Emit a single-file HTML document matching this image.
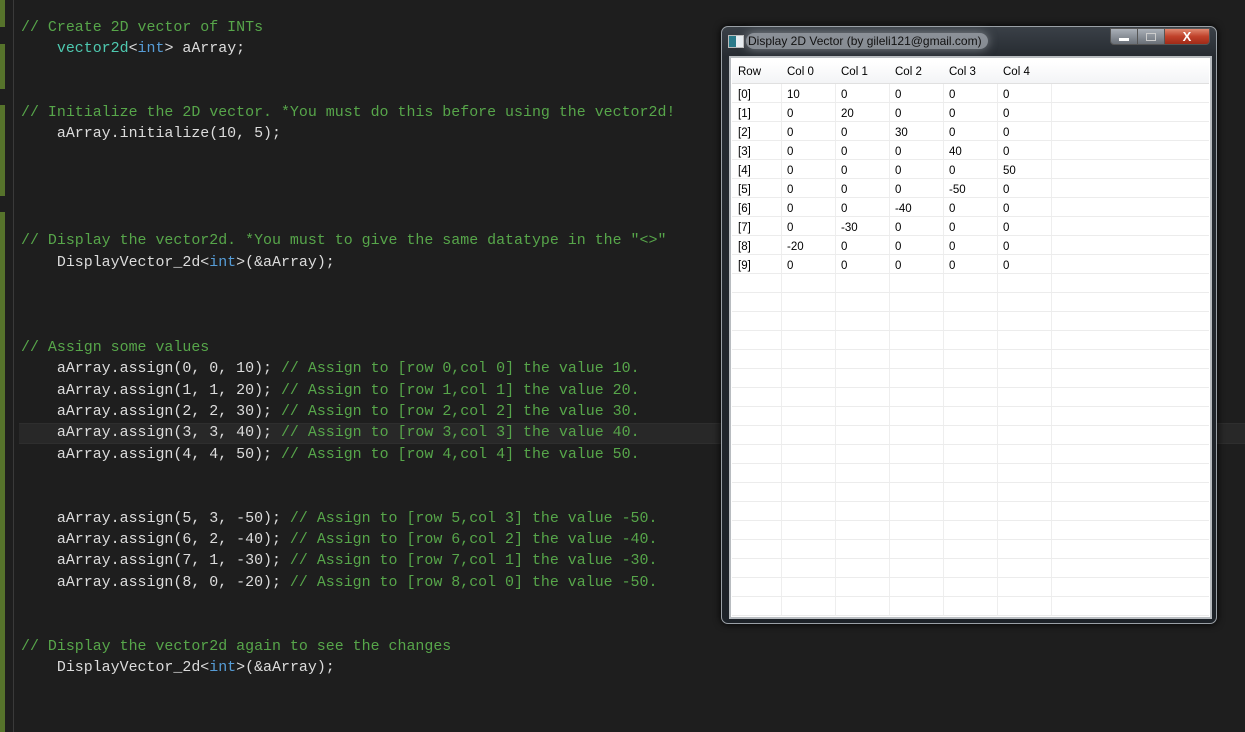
<!DOCTYPE html>
<html><head><style>
body{margin:0;width:1245px;height:732px;background:#1e1e1e;position:relative;overflow:hidden;font-family:"Liberation Mono",monospace;}
.g{position:absolute;left:0;width:5px;background:#56732b;}
.vl{position:absolute;left:13px;top:0;width:1px;height:732px;background:#3a3a3a;}
.hl{position:absolute;left:19px;top:423px;width:1226px;height:21px;background:#282828;border-top:1px solid #2e2e2e;border-bottom:1px solid #2e2e2e;box-sizing:border-box;}
.l{position:absolute;left:21px;font-size:14.95px;line-height:21px;color:#dcdcdc;white-space:pre;margin-top:1px;}
.c{color:#57a64a}.t{color:#4ec9b0}.k{color:#569cd6}
.win{position:absolute;left:721px;top:26px;width:496px;height:598px;border-radius:7px;background:linear-gradient(#3a4047,#262b31 30px,#1d2228);border:1px solid #9aa0a6;box-sizing:border-box;box-shadow:0 0 8px #000;}
.title{position:absolute;left:746px;top:33px;font-family:"Liberation Sans",sans-serif;font-size:12px;color:#111;background:rgba(210,215,222,.55);padding:1px 6px 1px 2px;border-radius:10px;box-shadow:0 0 10px rgba(210,215,222,.5);}
.ico{position:absolute;left:728px;top:35px;width:14px;height:11px;background:linear-gradient(90deg,#2a7a8a 50%,#e8eef2 50%);border:1px solid #bbb;}
.btn{position:absolute;top:28px;height:17px;border:1px solid #555;box-sizing:border-box;}
.inner{position:absolute;left:729px;top:56px;width:483px;height:563px;background:#fff;border:2px solid #b8bcc0;box-sizing:border-box;}
.grid{position:absolute;left:732px;top:62px;width:477px;height:554px;font-family:"Liberation Sans",sans-serif;font-size:11.5px;color:#000;
background-image:linear-gradient(90deg,transparent 49px,#eee 49px,#eee 50px,transparent 50px),linear-gradient(90deg,transparent 103px,#eee 103px,#eee 104px,transparent 104px),linear-gradient(90deg,transparent 157px,#eee 157px,#eee 158px,transparent 158px),linear-gradient(90deg,transparent 211px,#eee 211px,#eee 212px,transparent 212px),linear-gradient(90deg,transparent 265px,#eee 265px,#eee 266px,transparent 266px),linear-gradient(90deg,transparent 319px,#eee 319px,#eee 320px,transparent 320px);}
.rows{position:absolute;left:0;top:22px;width:477px;height:532px;background:repeating-linear-gradient(transparent 0,transparent 18px,#ececec 18px,#ececec 19px);}
.hdr{position:absolute;left:0;top:0;width:477px;height:21px;background:linear-gradient(#fff,#f3f4f6);border-bottom:1px solid #e0e0e0;}
.cell{position:absolute;}
</style></head><body>
<div class="g" style="top:0;height:27px"></div>
<div class="g" style="top:44px;height:45px"></div>
<div class="g" style="top:105px;height:91px"></div>
<div class="g" style="top:212px;height:520px"></div>
<div class="vl"></div>
<div class="hl"></div>
<div class="l c" style="top:17px">// Create 2D vector of INTs</div>
<div class="l" style="top:38px">    <span class="t">vector2d</span>&lt;<span class="k">int</span>&gt; aArray;</div>
<div class="l c" style="top:102px">// Initialize the 2D vector. *You must do this before using the vector2d!</div>
<div class="l" style="top:123px">    aArray.initialize(10, 5);</div>
<div class="l c" style="top:230px">// Display the vector2d. *You must to give the same datatype in the "&lt;&gt;"</div>
<div class="l" style="top:252px">    DisplayVector_2d&lt;<span class="k">int</span>&gt;(&amp;aArray);</div>
<div class="l c" style="top:337px">// Assign some values</div>
<div class="l" style="top:358px">    aArray.assign(0, 0, 10); <span class="c">// Assign to [row 0,col 0] the value 10.</span></div>
<div class="l" style="top:380px">    aArray.assign(1, 1, 20); <span class="c">// Assign to [row 1,col 1] the value 20.</span></div>
<div class="l" style="top:401px">    aArray.assign(2, 2, 30); <span class="c">// Assign to [row 2,col 2] the value 30.</span></div>
<div class="l" style="top:422px">    aArray.assign(3, 3, 40); <span class="c">// Assign to [row 3,col 3] the value 40.</span></div>
<div class="l" style="top:444px">    aArray.assign(4, 4, 50); <span class="c">// Assign to [row 4,col 4] the value 50.</span></div>
<div class="l" style="top:508px">    aArray.assign(5, 3, -50); <span class="c">// Assign to [row 5,col 3] the value -50.</span></div>
<div class="l" style="top:529px">    aArray.assign(6, 2, -40); <span class="c">// Assign to [row 6,col 2] the value -40.</span></div>
<div class="l" style="top:550px">    aArray.assign(7, 1, -30); <span class="c">// Assign to [row 7,col 1] the value -30.</span></div>
<div class="l" style="top:572px">    aArray.assign(8, 0, -20); <span class="c">// Assign to [row 8,col 0] the value -50.</span></div>
<div class="l c" style="top:636px">// Display the vector2d again to see the changes</div>
<div class="l" style="top:657px">    DisplayVector_2d&lt;<span class="k">int</span>&gt;(&amp;aArray);</div>

<div class="win"></div>
<div class="ico"></div>
<div class="title">Display 2D Vector (by gileli121@gmail.com)</div>
<div class="btn" style="left:1110px;width:28px;background:linear-gradient(#aab0b8,#6a7078);border-radius:0 0 0 4px"><div style="position:absolute;left:8px;top:9px;width:10px;height:3px;background:#fff"></div></div>
<div class="btn" style="left:1137px;width:28px;background:linear-gradient(#aab0b8,#6a7078)"><div style="position:absolute;left:8px;top:4px;width:8px;height:6px;border:1px solid #ccc"></div></div>
<div class="btn" style="left:1164px;width:46px;background:linear-gradient(#e08870,#c0412a 50%,#a02a18);border-radius:0 0 4px 0;color:#fff;font:bold 13px 'Liberation Sans',sans-serif;text-align:center;line-height:15px">X</div>
<div class="inner"></div>
<div class="grid">
<div class="rows"></div>
<div class="hdr"></div>
<div class="cell" style="left:6px;top:4px">Row</div><div class="cell" style="left:55px;top:4px">Col 0</div><div class="cell" style="left:109px;top:4px">Col 1</div><div class="cell" style="left:163px;top:4px">Col 2</div><div class="cell" style="left:217px;top:4px">Col 3</div><div class="cell" style="left:271px;top:4px">Col 4</div>
<div class="cell" style="left:6px;top:24px;line-height:19px">[0]<br>[1]<br>[2]<br>[3]<br>[4]<br>[5]<br>[6]<br>[7]<br>[8]<br>[9]</div>
<div class="cell" style="left:55px;top:24px;line-height:19px">10<br>0<br>0<br>0<br>0<br>0<br>0<br>0<br>-20<br>0</div>
<div class="cell" style="left:109px;top:24px;line-height:19px">0<br>20<br>0<br>0<br>0<br>0<br>0<br>-30<br>0<br>0</div>
<div class="cell" style="left:163px;top:24px;line-height:19px">0<br>0<br>30<br>0<br>0<br>0<br>-40<br>0<br>0<br>0</div>
<div class="cell" style="left:217px;top:24px;line-height:19px">0<br>0<br>0<br>40<br>0<br>-50<br>0<br>0<br>0<br>0</div>
<div class="cell" style="left:271px;top:24px;line-height:19px">0<br>0<br>0<br>0<br>50<br>0<br>0<br>0<br>0<br>0</div>
</div>
</body></html>
